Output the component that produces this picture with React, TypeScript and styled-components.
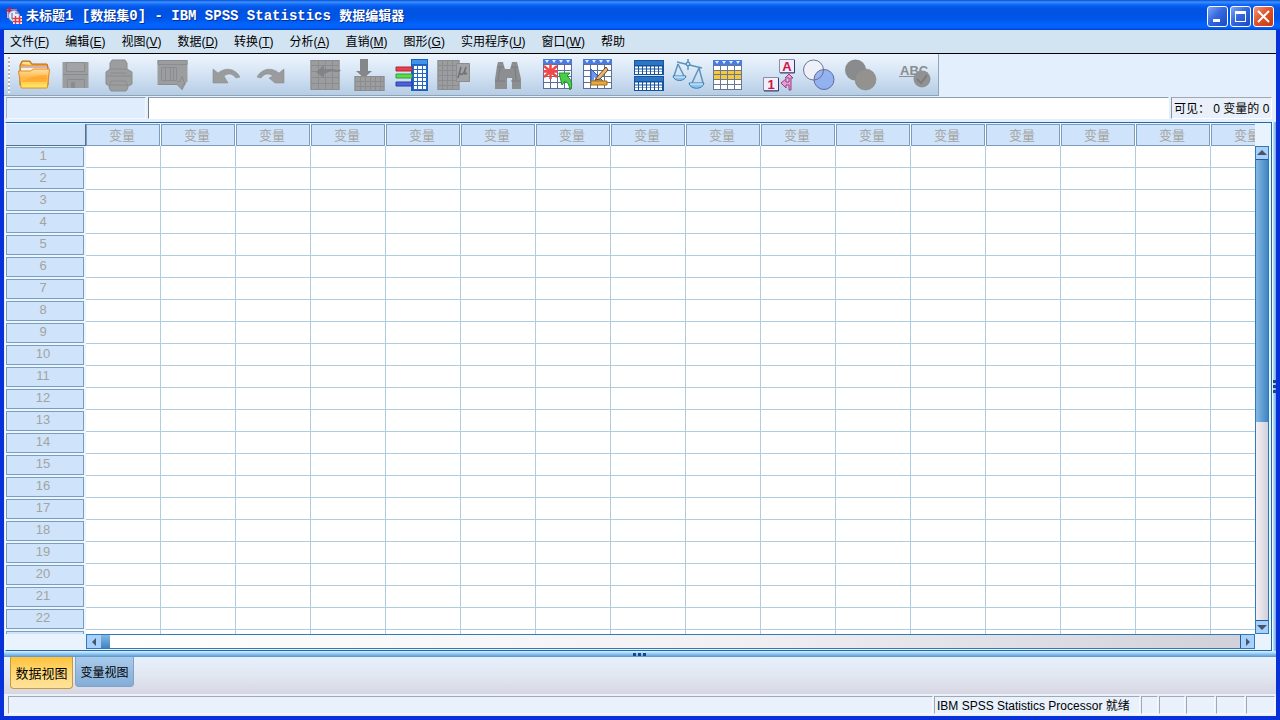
import React from 'react';
import styled, { createGlobalStyle } from 'styled-components';

const UI_FONT = '"Liberation Sans", "Noto Sans CJK SC", sans-serif';

const GlobalStyle = createGlobalStyle`
  * { box-sizing: border-box; }
  body { margin: 0; font-family: ${UI_FONT}; font-size: 12px; color: #000; }
  button, input { font: inherit; color: inherit; margin: 0; }
`;

const Window = styled.div`
  display: flex;
  flex-direction: column;
  height: 100vh;
  overflow: hidden;
  background: #0831d9;
`;

const TitleBar = styled.header`
  flex: none;
  display: flex;
  align-items: center;
  gap: 4px;
  height: 30px;
  padding: 2px 6px 0;
  background: linear-gradient(180deg, #0a4ad0 0, #3a93ff 2px, #0a62f4 5px, #0054e3 9px, #0054e6 18px, #0264ff 25px, #0260f8 28px, #0040c8 30px);
`;

const Title = styled.h1`
  flex: 1;
  margin: 0;
  color: #fff;
  font: bold 14px/20px "Liberation Mono", "Noto Sans CJK SC", monospace;
  white-space: nowrap;
  text-shadow: 1px 1px 0 #0a2f8c;
`;

const Han = styled.span`
  font-size: 13px;
`;

const CaptionButtons = styled.div`
  display: flex;
  gap: 2px;
`;

const CaptionButton = styled.button<{ $close?: boolean }>`
  display: grid;
  place-items: center;
  width: 21px;
  height: 21px;
  padding: 0;
  border: 1px solid #fff;
  border-radius: 3px;
  background: ${(p) =>
    p.$close
      ? 'linear-gradient(135deg, #f09a80, #e0532c 45%, #c8360c)'
      : 'linear-gradient(135deg, #7fa6f4, #3468e0 45%, #1c48c4)'};
`;

const Client = styled.div`
  flex: 1;
  min-height: 0;
  display: flex;
  flex-direction: column;
  margin: 0 4px 4px;
  background: #e4effd;
`;

const MenuBar = styled.nav`
  flex: none;
  display: flex;
  align-items: center;
  gap: 16px;
  height: 24px;
  padding: 0 6px;
  border-bottom: 1px solid #000;
  background: #d2e3f2;
`;

const MenuItem = styled.button`
  padding: 0;
  border: 0;
  background: none;
  line-height: 20px;
  white-space: nowrap;
`;

const ToolBar = styled.div`
  flex: none;
  align-self: flex-start;
  display: flex;
  align-items: center;
  gap: 11px;
  height: 42px;
  padding-left: 4px;
  border-right: 1px solid #8fa5bd;
  border-bottom: 1px solid #8fa3b8;
  background: linear-gradient(180deg, #eef5fd, #d6e5f5 45%, #b6cde5);
`;

const Grip = styled.div`
  width: 2px;
  height: 36px;
  margin-right: -9px;
  background: repeating-linear-gradient(180deg, #b8b4ae 0 2px, #f4f8fc 2px 4px);
`;

const ToolGroup = styled.div`
  display: flex;
`;

const ToolButton = styled.button<{ $width: number }>`
  display: grid;
  place-items: center;
  width: ${(p) => p.$width}px;
  height: 40px;
  padding: 0;
  border: 0;
  background: none;
`;

const EditRow = styled.div`
  flex: none;
  display: flex;
  gap: 2px;
  height: 26px;
  padding: 1px 4px 3px 2px;
`;

const CellName = styled.input`
  width: 140px;
  padding: 0 4px;
  border: 1px solid;
  border-color: #8e9fb0 #f4f8fc #f4f8fc #a8b6c6;
  background: #e0edfc;
`;

const CellValue = styled.input`
  flex: 1;
  min-width: 0;
  padding: 0 4px;
  border: 1px solid;
  border-color: #8e9fb0 #fff #fff #6f7c8a;
  background: #fff;
`;

const VisibleCount = styled.output`
  width: 101px;
  padding-left: 2px;
  border: 1px solid;
  border-color: #a0a8b2 #fff #fff #8c949e;
  background: #e9f0fa;
  line-height: 22px;
  white-space: nowrap;
`;

const Workspace = styled.main`
  flex: 1;
  min-height: 0;
  display: flex;
`;

const GridPanel = styled.section`
  flex: 1;
  min-width: 0;
  display: grid;
  grid-template: 22px minmax(0, 1fr) 15px / 80px minmax(0, 1fr) 14px;
  margin-left: 1px;
  padding: 1px 2px 1px 0;
  border: 1px solid #2468a8;
  border-left-color: #f4faff;
  background: #e9f3fe;
`;

const Viewport = styled.div`
  grid-area: 1 / 1 / 3 / 3;
  overflow: hidden;
`;

const Sheet = styled.table`
  width: 1280px;
  table-layout: fixed;
  border-spacing: 0;
  background: #fff;
  font-size: 13px;
`;

const Corner = styled.th`
  width: 80px;
  height: 22px;
  padding: 0;
  border-right: 1px solid #54708c;
  border-bottom: 1px solid #54708c;
  background: #cfe3fb;
`;

const ColumnHead = styled.th`
  width: 75px;
  height: 22px;
  padding: 0 1px 0 0;
  font-weight: normal;
`;

const RowHead = styled.th`
  height: 22px;
  padding: 1px 2px 1px 0;
  background: #e9f5ff;
  font-weight: normal;
`;

const HeadBox = styled.div<{ $row?: boolean }>`
  height: ${(p) => (p.$row ? 20 : 22)}px;
  padding-right: ${(p) => (p.$row ? 4 : 2)}px;
  border: 1px solid #7c9cbc;
  background: #cfe3fb;
  color: #a4a49e;
  line-height: ${(p) => (p.$row ? 16 : 22)}px;
  text-align: center;
`;

const Cell = styled.td`
  height: 22px;
  padding: 0;
  border-right: 1px solid #b0cce0;
  border-bottom: 1px solid #b0cce0;
`;

const ScrollBar = styled.div<{ $vertical?: boolean }>`
  grid-area: ${(p) => (p.$vertical ? '2 / 3' : '3 / 2')};
  min-height: 0;
  display: flex;
  flex-direction: ${(p) => (p.$vertical ? 'column' : 'row')};
  border: 1px solid #2f7ab8;
  background: ${(p) =>
    p.$vertical
      ? 'linear-gradient(90deg, #f6f0f2, #cfd0dc)'
      : 'linear-gradient(90deg, #ffffff, #f2f0f3 55%, #d0d0d8)'};
`;

const ArrowButton = styled.button<{ $end?: boolean; $vertical?: boolean }>`
  flex: none;
  display: grid;
  place-items: center;
  width: ${(p) => (p.$vertical ? 12 : 14)}px;
  height: 13px;
  margin-left: ${(p) => (p.$end && !p.$vertical ? 'auto' : '0')};
  margin-top: ${(p) => (p.$end && p.$vertical ? 'auto' : '0')};
  padding: 0;
  border: 0 solid #1c5c9c;
  border-width: ${(p) =>
    p.$vertical ? (p.$end ? '1px 0 0' : '0 0 1px') : p.$end ? '0 0 0 1px' : '0'};
  background: #a9d0fa;
`;

const Thumb = styled.div<{ $vertical?: boolean }>`
  flex: none;
  width: ${(p) => (p.$vertical ? '12px' : '9px')};
  height: ${(p) => (p.$vertical ? '54%' : '13px')};
  background: ${(p) =>
    p.$vertical
      ? 'linear-gradient(90deg, #86b8e4, #3f84c2)'
      : 'linear-gradient(180deg, #86b8e4, #3f84c2)'};
`;

const SideSplitter = styled.div`
  width: 4px;
  display: grid;
  place-items: center;
  border-left: 1px solid #f4fbff;
  background: linear-gradient(90deg, #bfe6ff, #6ea4dc);
`;

const BottomSplitter = styled.div`
  flex: none;
  display: grid;
  place-items: center;
  height: 6px;
  background: linear-gradient(180deg, #d8f2ff, #8cc6f4 50%, #5b92c6);
`;

const TabStrip = styled.div`
  flex: none;
  display: flex;
  align-items: flex-start;
  gap: 2px;
  height: 37px;
  padding-left: 6px;
  background: linear-gradient(180deg, #e6f1fd, #e2e7f2 50%, #d6d6e2);
`;

const Tab = styled.button<{ $active?: boolean }>`
  height: ${(p) => (p.$active ? 32 : 30)}px;
  width: ${(p) => (p.$active ? 63 : 59)}px;
  padding: 0;
  border: 1px solid ${(p) => (p.$active ? '#c79a3c' : '#7ea2c8')};
  border-top-width: 0;
  border-radius: 0 0 4px 4px;
  background: ${(p) =>
    p.$active
      ? 'linear-gradient(180deg, #ffc23a, #ffd877 50%, #ffe39a)'
      : 'linear-gradient(180deg, #a9caeb, #83add8)'};
  font-size: ${(p) => (p.$active ? 13 : 12)}px;
  white-space: nowrap;
`;

const StatusBar = styled.footer`
  flex: none;
  display: flex;
  gap: 1px;
  height: 22px;
  padding: 2px 1px 2px 4px;
  background: #e8f1fc;
`;

const StatusCell = styled.div<{ $width?: number }>`
  flex: ${(p) => (p.$width ? `0 0 ${p.$width}px` : '1')};
  padding-left: 2px;
  border: 1px solid;
  border-color: #a4a8ae #f6faff #f6faff #a4a8ae;
  line-height: 18px;
  white-space: nowrap;
`;

const G = '#9c9d9f';
const D = '#8b8c8f';

function lines(xs: number[], ys: number[], x0: number, x1: number, y0: number, y1: number) {
  return xs.map((x) => `M${x} ${y0}V${y1}`).join('') + ys.map((y) => `M${x0} ${y}H${x1}`).join('');
}

function TableArt() {
  return (
    <>
      <path d="M4 2h29v30H4z" fill="#fff" />
      <path d="M4 2h29v5H4z" fill="#4a7be0" />
      <path d="M6 3h4l-2 3zM13 3h4l-2 3zM20 3h4l-2 3zM27 3h4l-2 3z" fill="#e6efff" />
      <path d={lines([4.5, 11.5, 18.5, 25.5, 32.5], [7.5, 13.5, 19.5, 25.5, 31.5], 4, 33, 7, 32)} stroke="#5a6f9c" fill="none" />
    </>
  );
}

const ART: Record<string, React.ReactNode> = {
  open: (
    <>
      <path d="M4 8l2-4h8l2 3h15l1 3v18H4z" fill="#f0a132" stroke="#b96a16" />
      <path d="M6 7l1-2h6l2 3z" fill="#ffe79a" />
      <path d="M5 9h26v5H5z" fill="#fff4dc" />
      <path d="M5 10h27" stroke="#a87088" />
      <path d="M2.500 14h12l3-2h16l-2 18q0 1-1 1H6q-1 0-1-1z" fill="url(#folder)" stroke="#e08a1c" />
      <path d="M5 24c8-1 9-6 26-6l-1 7H6z" fill="#ff9c1c" opacity=".5" />
    </>
  ),
  save: (
    <>
      <path d="M3.500 5H29.500V31H3.500z" fill={G} />
      <path d="M7.500 5.500h18v9h-18z" fill="#a2a3a5" stroke={D} />
      <path d="M4 17.500h25M8.500 31v-8.500h17V31" fill="none" stroke={D} />
      <path d="M12 25h4v6h-4z" fill={D} />
    </>
  ),
  print: (
    <>
      <path d="M10 3h13l2 3v8H8V6z" fill={G} stroke={D} />
      <path d="M8 12h17l5 3v12l-3 2H7l-3-2V15z" fill={G} stroke={D} />
      <path d="M9 24h15l2 7-2 3H9l-2-3z" fill={G} stroke={D} />
      <path d="M5 19h24M9 28h16M8 16h17" stroke={D} />
    </>
  ),
  recall: (
    <>
      <path d="M1.500 3h30v22h-1l-4 8-5-5h-20z" fill={G} />
      <path d="M2 3.500h29v4H2zM5.500 10.500h15v13h-15zM9.500 10v13M14.500 10v13M17.500 10v13M2 27.500h19l5 5 1-5h2l-3-8-2 5h-3" stroke={D} fill="none" />
    </>
  ),
  undo: <path d="M3 12l5 4c7-6 17-5 22 4l-4 1c-4-5-8-5-12-2l4 7H3z" fill="#9a9b9d" stroke="#8d8e90" strokeWidth=".6" />,
  redo: <path d="M31 12l-5 4c-7-6-17-5-22 4l4 1c4-5 8-5 12-2l-4 2 6 5h9z" fill="#9a9b9d" stroke="#8d8e90" strokeWidth=".6" />,
  gotoCase: (
    <>
      <path d="M3.500 3h29v30h-29z" fill={G} />
      <path d={lines([4, 11.5, 18.5, 25.5, 32], [3.5, 8.5, 14.5, 20.5, 26.5, 32.5], 4, 32, 3, 33)} stroke={D} fill="none" />
      <path d="M9 15l8-7v4h7l10 1-2 2-8-1-7 3v4z" fill="#828386" />
    </>
  ),
  gotoVar: (
    <>
      <path d="M10 2h8v12h4l-8 7-8-7h4z" fill="#858688" />
      <path d="M4.500 19h30v15h-30z" fill={G} />
      <path d={lines([5, 10.5, 15.5, 20.5, 25.5, 30.5, 34], [19.5, 24.5, 29.5, 33.5], 5, 34, 19, 34)} stroke={D} fill="none" />
    </>
  ),
  variables: (
    <>
      <path d="M18 2h17v32H18z" fill="#1c5fc0" />
      <path d="M19 3h15v4H19z" fill="#3f93ea" />
      <path d="M20 8h14v25H20z" fill="#fff" />
      <path d={lines([20.5, 24.5, 29.5, 33.5], [8.5, 12.5, 16.5, 20.5, 24.5, 28.5, 32.5], 20, 34, 8, 33)} stroke="#2468c4" fill="none" />
      <path d="M3 10h16v4H3z" fill="#e8404c" stroke="#a82838" />
      <path d="M3 17h16v4H3z" fill="#5cdc4c" stroke="#349c34" />
      <path d="M3 25h16v4H3z" fill="#4a62dc" stroke="#2c3ca4" />
    </>
  ),
  stats: (
    <>
      <path d="M1.500 3h22v30h-22z" fill={G} />
      <path d={lines([2, 6.5, 11.5, 16.5, 23], [3.5, 8.5, 13.5, 18.5, 23.5, 28.5, 32.5], 2, 23, 3, 33)} stroke={D} fill="none" />
      <path d="M20.500 6.500h13v18h-13z" fill="#a1a2a4" stroke={D} />
      <path d="M25 10l-3 11M24 16c1 3 4 1 5-3l1-3M29 14c-1 3 0 4 2 2" stroke="#6e6f72" strokeWidth="1.500" fill="none" />
    </>
  ),
  find: (
    <>
      <path d="M9 9l1-4h5l1 4 1 3h5l1-3 1-4h5l1 4 3 13v10h-9V21h-5v11H7V22z" fill="#8d8e90" />
      <path d="M9 10h7M23 10h7M7 24h10M23 24h9M12 11l-2 12M27 11l1 12" stroke="#7b7c80" />
    </>
  ),
  insertCase: (
    <>
      <TableArt />
      <path d="M11.500 7v15M5 9l13 11M18 9L5 20M4 14.500h15" stroke="#f04848" strokeWidth="2.500" />
      <path d="M20 16h11l-3 3c5 4 6 9 3 14-1-5-2-8-5-9l-3 4z" fill="#4ccc48" stroke="#1e9430" />
    </>
  ),
  insertVar: (
    <>
      <TableArt />
      <path d="M12 12v14h14z" fill="#6f96ec" stroke="#2c56c4" />
      <path d="M15 20v3h3z" fill="#fff" />
      <path d="M12 24h16v4H12z" fill="#f0a82c" stroke="#a4701c" />
      <path d="M27 10l-8 9-3 4 5-1 8-9z" fill="#e8b870" stroke="#6a4420" />
    </>
  ),
  split: (
    <>
      {[3, 19].map((y) => (
        <g key={y}>
          <path d={`M4 ${y}h30v15H4z`} fill="#15539c" />
          <path d={`M5 ${y + 1}h28v4H5z`} fill="#2c74c4" />
          <path d={`M5 ${y + 7.5}h28M5 ${y + 10.5}h28M5 ${y + 13}h28`} stroke="#fff" strokeWidth="2" strokeDasharray="3 1" />
        </g>
      ))}
    </>
  ),
  weight: (
    <>
      <path d="M7 5l25 6M18 2v11M8 7L4 19M8 7l6 12M29 11l-7 15M29 11l4 15" stroke="#5c94bc" strokeWidth="1.500" fill="none" />
      <circle cx="18" cy="7" r="2" fill="#bfe0f4" stroke="#3a78a8" />
      <path d="M3 19h13c-1 6-12 6-13 0zM19 26h15c-1 7-14 7-15 0z" fill="#8cc4ee" stroke="#3a7cb4" />
      <path d="M4 20h11M20 27h13" stroke="#e6f6ff" />
    </>
  ),
  select: (
    <>
      <path d="M3 3h29v30H3z" fill="#fff" />
      <path d="M3 3h29v5H3z" fill="#4a7be0" />
      <path d="M5 4h4l-2 3zM12 4h4l-2 3zM19 4h4l-2 3zM26 4h4l-2 3z" fill="#e6efff" />
      <path d="M3 13h29v9H3z" fill="#f8c838" />
      <path d={lines([3.5, 10.5, 17.5, 24.5, 31.5], [8.5, 13.5, 17.5, 22.5, 27.5, 32.5], 3, 32, 8, 33)} stroke="#667898" fill="none" />
    </>
  ),
  labels: (
    <>
      <path d="M18.500 2.500h15v13h-15zM2.500 20.500h15v13h-15z" fill="#f2eef8" stroke="#8a8ab0" />
      <path d="M33.500 3v13H19M17.500 21v13H3" stroke="#34406c" fill="none" />
      <text x="26" y="13.500" textAnchor="middle" fontFamily="Liberation Sans, sans-serif" fontWeight="bold" fontSize="13" fill="#cc1448">A</text>
      <text x="10" y="31.500" textAnchor="middle" fontFamily="Liberation Sans, sans-serif" fontWeight="bold" fontSize="13" fill="#cc1448">1</text>
      <path d="M24 21l4-4 4 4h-2v12h-2v-5h-3v3l-5-5 5-4v3h3v-4z" fill="#ec9ccc" stroke="#9c3c88" />
    </>
  ),
  sets: (
    <>
      <circle cx="12.500" cy="13" r="10" fill="#f2f2fa" fillOpacity=".8" stroke="#70768c" />
      <circle cx="23" cy="22.500" r="10" fill="#84a8f0" fillOpacity=".8" stroke="#5c6ca0" />
      <path d="M22.500 13A10 10 0 0 1 12.500 23" stroke="#70768c" fill="none" />
    </>
  ),
  all: (
    <>
      <circle cx="14.500" cy="13" r="10.500" fill="#8a8b8c" />
      <circle cx="24.500" cy="22.500" r="10.500" fill="#93928e" stroke="#828384" strokeWidth=".6" />
    </>
  ),
  spell: (
    <>
      <text x="4" y="18" fontFamily="Liberation Sans, sans-serif" fontWeight="bold" fontSize="13" fill="#8b8c90">ABC</text>
      <path d="M3 19.500h18" stroke="#8b8c90" />
      <circle cx="26" cy="22" r="8.500" fill="#909193" />
      <path d="M21 22l4 4 6-8" stroke="#7b7c7f" strokeWidth="2" fill="none" />
    </>
  ),
};

type Tool = { art: string; label: string };
const TOOL_GROUPS: { width: number; tools: Tool[] }[] = [
  { width: 43, tools: [{ art: 'open', label: '打开' }, { art: 'save', label: '保存' }, { art: 'print', label: '打印' }] },
  { width: 43, tools: [{ art: 'recall', label: '重新调用对话框' }] },
  { width: 43, tools: [{ art: 'undo', label: '撤消' }, { art: 'redo', label: '重做' }] },
  {
    width: 43,
    tools: [
      { art: 'gotoCase', label: '转到个案' },
      { art: 'gotoVar', label: '转到变量' },
      { art: 'variables', label: '变量' },
      { art: 'stats', label: '描述统计' },
    ],
  },
  { width: 40, tools: [{ art: 'find', label: '查找' }] },
  { width: 40, tools: [{ art: 'insertCase', label: '插入个案' }, { art: 'insertVar', label: '插入变量' }] },
  {
    width: 40,
    tools: [{ art: 'split', label: '拆分文件' }, { art: 'weight', label: '加权个案' }, { art: 'select', label: '选择个案' }],
  },
  {
    width: 40,
    tools: [{ art: 'labels', label: '值标签' }, { art: 'sets', label: '使用变量集' }, { art: 'all', label: '显示所有变量' }],
  },
  { width: 48, tools: [{ art: 'spell', label: '拼写检查' }] },
];

const MENUS: [string, string?][] = [
  ['文件', 'F'], ['编辑', 'E'], ['视图', 'V'], ['数据', 'D'], ['转换', 'T'], ['分析', 'A'],
  ['直销', 'M'], ['图形', 'G'], ['实用程序', 'U'], ['窗口', 'W'], ['帮助'],
];

const COLUMNS = Array.from({ length: 16 }, (_, i) => i);
const ROWS = Array.from({ length: 23 }, (_, i) => i + 1);

function Arrow({ d }: { d: string }) {
  return (
    <svg width="10" height="10" viewBox="0 0 10 10" aria-hidden="true">
      <path d={d} fill="#46566a" />
    </svg>
  );
}

function AppIcon() {
  return (
    <svg width="16" height="18" viewBox="0 0 16 18" aria-hidden="true">
      <path d="M1 2h10v9H1z" fill="#e6a8c4" />
      <path d="M3.500 0v11M0 3.500h11" stroke="#b02458" strokeWidth="2" />
      <circle cx="8" cy="9" r="5.500" fill="#e8ecf8" stroke="#8c9cc8" />
      <path d="M6 6v6h3M9 6h4" stroke="#4c5c94" fill="none" />
      <path d="M7 9h9v8H7z" fill="#fff" />
      <path d="M9.500 9v8M13.500 9v8M7 11.500h9M7 14.500h9" stroke="#d83c50" strokeWidth="1.500" />
    </svg>
  );
}

export default function App() {
  return (
    <Window>
      <GlobalStyle />
      <TitleBar>
        <AppIcon />
        <Title>
          <Han>未标题</Han>1 [<Han>数据集</Han>0] - IBM SPSS Statistics <Han>数据编辑器</Han>
        </Title>
        <CaptionButtons>
          <CaptionButton aria-label="最小化">
            <svg width="17" height="17" viewBox="0 0 17 17"><path d="M4 11h7v3H4z" fill="#fff" /></svg>
          </CaptionButton>
          <CaptionButton aria-label="最大化">
            <svg width="17" height="17" viewBox="0 0 17 17"><path d="M3 3h11v11H3zM4 6v7h9V6z" fill="#fff" fillRule="evenodd" /></svg>
          </CaptionButton>
          <CaptionButton $close aria-label="关闭">
            <svg width="17" height="17" viewBox="0 0 17 17"><path d="M3 3l11 11M14 3L3 14" stroke="#fff" strokeWidth="2" /></svg>
          </CaptionButton>
        </CaptionButtons>
      </TitleBar>
      <Client>
        <MenuBar>
          {MENUS.map(([name, key]) => (
            <MenuItem key={name}>
              {name}
              {key && <>(<u>{key}</u>)</>}
            </MenuItem>
          ))}
        </MenuBar>
        <ToolBar role="toolbar">
          <Grip />
          {TOOL_GROUPS.map((group) => (
            <ToolGroup key={group.tools[0].art}>
              {group.tools.map((tool) => (
                <ToolButton key={tool.art} $width={group.width} aria-label={tool.label}>
                  <svg width="36" height="36" viewBox="0 0 36 36" aria-hidden="true">
                    {tool.art === 'open' && (
                      <defs>
                        <linearGradient id="folder" x1="0" y1="0" x2="0" y2="1">
                          <stop offset="0" stopColor="#ffe0a0" />
                          <stop offset=".5" stopColor="#ffb444" />
                          <stop offset="1" stopColor="#fff06a" />
                        </linearGradient>
                      </defs>
                    )}
                    {ART[tool.art]}
                  </svg>
                </ToolButton>
              ))}
            </ToolGroup>
          ))}
        </ToolBar>
        <EditRow>
          <CellName aria-label="单元格" readOnly />
          <CellValue aria-label="单元格值" />
          <VisibleCount>可见： 0 变量的 0</VisibleCount>
        </EditRow>
        <Workspace>
          <GridPanel>
            <Viewport>
              <Sheet>
                <thead>
                  <tr>
                    <Corner />
                    {COLUMNS.map((c) => (
                      <ColumnHead key={c} scope="col"><HeadBox>变量</HeadBox></ColumnHead>
                    ))}
                  </tr>
                </thead>
                <tbody>
                  {ROWS.map((r) => (
                    <tr key={r}>
                      <RowHead scope="row"><HeadBox $row>{r}</HeadBox></RowHead>
                      {COLUMNS.map((c) => <Cell key={c} />)}
                    </tr>
                  ))}
                </tbody>
              </Sheet>
            </Viewport>
            <ScrollBar $vertical>
              <ArrowButton $vertical aria-label="向上"><Arrow d="M0 7l5-5 5 5z" /></ArrowButton>
              <Thumb $vertical />
              <ArrowButton $vertical $end aria-label="向下"><Arrow d="M0 3l5 5 5-5z" /></ArrowButton>
            </ScrollBar>
            <ScrollBar>
              <ArrowButton aria-label="向左"><Arrow d="M7 1L3 5l4 4z" /></ArrowButton>
              <Thumb />
              <ArrowButton $end aria-label="向右"><Arrow d="M3 1l4 4-4 4z" /></ArrowButton>
            </ScrollBar>
          </GridPanel>
          <SideSplitter>
            <svg width="3" height="14" viewBox="0 0 3 14" aria-hidden="true">
              <path d="M0 0h3v3H0zM0 5h3v3H0zM0 10h3v3H0z" fill="#16488c" />
            </svg>
          </SideSplitter>
        </Workspace>
        <BottomSplitter>
          <svg width="14" height="3" viewBox="0 0 14 3" aria-hidden="true">
            <path d="M0 0h3v3H0zM5 0h3v3H5zM10 0h3v3h-3z" fill="#16488c" />
          </svg>
        </BottomSplitter>
        <TabStrip role="tablist">
          <Tab $active role="tab" aria-selected="true">数据视图</Tab>
          <Tab role="tab" aria-selected="false">变量视图</Tab>
        </TabStrip>
        <StatusBar>
          <StatusCell />
          <StatusCell $width={206}>IBM SPSS Statistics Processor 就绪</StatusCell>
          <StatusCell $width={17} />
          <StatusCell $width={26} />
          <StatusCell $width={29} />
          <StatusCell $width={29} />
          <StatusCell $width={29} />
        </StatusBar>
      </Client>
    </Window>
  );
}
